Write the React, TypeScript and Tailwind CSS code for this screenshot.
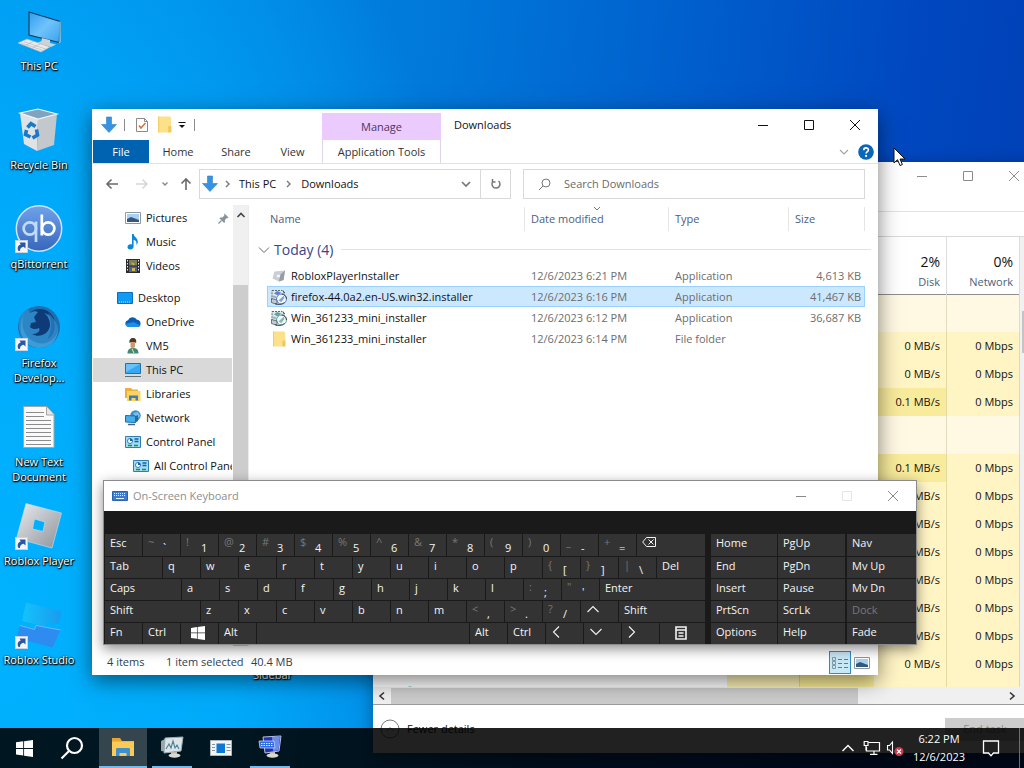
import type { ReactNode } from "react";

/* ---------- small shared drawing helpers ---------- */

type StrokeProps = { d: string; w?: number; h?: number; sw?: number; className?: string };

function Stroke({ d, w = 12, h = 12, sw = 1, className = "" }: StrokeProps) {
  return (
    <svg width={w} height={h} viewBox={`0 0 ${w} ${h}`} fill="none" stroke="currentColor" strokeWidth={sw} className={`shrink-0 ${className}`} aria-hidden="true">
      <path d={d} />
    </svg>
  );
}

const CHEVRON_DOWN = "M2 4l4 4 4-4";
const CHEVRON_RIGHT = "M4 3l3 3-3 3";
const MINIMIZE = "M1 6.5h10";
const MAXIMIZE = "M1.5 1.5h9v9h-9z";
const CLOSE = "M1 1l10 10M11 1L1 11";

function DownloadArrow({ size = 18 }: { size?: number }) {
  return (
    <svg width={size} height={size} viewBox="0 0 18 18" aria-hidden="true">
      <path d="M6.500 1h5v7.500H16.500L9 16.500 1.500 8.500h5z" fill="#3593e2" stroke="#2d7fcb" strokeWidth=".6" />
    </svg>
  );
}

function Folder({ size = 16 }: { size?: number }) {
  return (
    <svg width={size} height={size} viewBox="0 0 16 16" aria-hidden="true">
      <path d="M2 .5h11l1.200 1.200V14.500L13 15.500H2z" fill="#fce08a" />
      <path d="M2 .5h1v15H2z" fill="#f3cd62" />
      <path d="M11.500 9.500h3V15.500h-3z" fill="#f0c95c" />
    </svg>
  );
}

function ShortcutBadge({ y = 35 }: { y?: number }) {
  return (
    <g transform={`translate(0 ${y})`}>
      <rect x=".5" y=".5" width="12" height="12" fill="#f4f6fa" stroke="#c9d3e0" />
      <path d="M3.200 10.800c-1.200-3.600.2-5.800 2.600-6.300L4.500 2.500h6v6L8.600 6.800C6.500 7.200 4.800 8.500 5 11z" fill="#2a57a5" />
    </g>
  );
}

/* ---------- desktop ---------- */

const big = { width: 48, height: 48, viewBox: "0 0 48 48", "aria-hidden": true } as const;

const desktopItems: { label: string; icon: ReactNode }[] = [
  {
    label: "This PC",
    icon: (
      <svg {...big}>
        <defs>
          <linearGradient id="scr" x1="0" y1="0" x2="1" y2="1">
            <stop offset="0" stopColor="#2f9df0" />
            <stop offset=".5" stopColor="#6fc3fb" />
            <stop offset="1" stopColor="#3aa3ef" />
          </linearGradient>
        </defs>
        <path d="M14 5l31 9.500-.7 21L14 28z" fill="url(#scr)" stroke="#17415f" strokeWidth="1.200" />
        <path d="M45 14.500v20.500l-1 .7" stroke="#b9cbd6" strokeWidth="1.200" fill="none" />
        <path d="M27 31l8 2v3l6 1.500-5 2.500-14-4 4.500-2z" fill="#cbd3d9" />
        <path d="M3 36l9-4 23 8-9 5z" fill="#eceae8" stroke="#b5b7ba" strokeWidth=".6" />
        <path d="M6 36.200l22 7.200M9 34.800l22 7.300M11 38l8-3.800M18 40.400l8-3.800" stroke="#a9b4bf" strokeWidth=".6" />
      </svg>
    ),
  },
  {
    label: "Recycle Bin",
    icon: (
      <svg {...big}>
        <path d="M5 7l18 5-1 33-13-7z" fill="#dfe3e6" />
        <path d="M23 12l19-4-3 31-17 6z" fill="#c3c8cc" />
        <path d="M5 7l18-4 19 5-19 5z" fill="#7ea4bf" stroke="#eef4f8" strokeWidth="1.200" />
        <g fill="none" stroke="#1b78c8" strokeWidth="3.600">
          <path d="M12.500 21.500l3.500-4 4.500 3" />
          <path d="M11.500 24l-1 4.500 5 2.500" />
          <path d="M21.500 23.500l1 5.500-5 3" />
        </g>
      </svg>
    ),
  },
  {
    label: "qBittorrent",
    icon: (
      <svg {...big}>
        <defs>
          <linearGradient id="qb" x1="0" y1="0" x2="0" y2="1">
            <stop offset="0" stopColor="#70a2ea" />
            <stop offset="1" stopColor="#3766bb" />
          </linearGradient>
        </defs>
        <circle cx="24" cy="23.500" r="22.700" fill="url(#qb)" stroke="#cfe3fb" strokeWidth="1.500" />
        <g fill="none" strokeWidth="2.700">
          <circle cx="14.800" cy="23.500" r="6.200" stroke="#c3dbfa" />
          <path d="M21 16.500V37" stroke="#c3dbfa" />
          <circle cx="33.200" cy="23.500" r="6.200" stroke="#fff" />
          <path d="M26.800 9.500v21" stroke="#fff" />
        </g>
        <ShortcutBadge />
      </svg>
    ),
  },
  {
    label: "Firefox Develop...",
    icon: (
      <svg {...big}>
        <circle cx="24" cy="23" r="21" fill="#1f6fae" />
        <circle cx="25" cy="20" r="15" fill="#0e3b78" />
        <path d="M4 15c2-5 5-8 9-10l2 4c3-2 6-2 8-1l-4 5 2 5-5 1-1 4c3 3 7 2 9 1 2 4-3 6-7 6 7 4 16 1 18-8 0-6-2-10-6-13 7 2 14 9 14 17 0 10-9 18-19 18C12 44 2 34 4 15z" fill="#2c86c6" />
        <path d="M9 10c-4 12 0 25 14 29 9 2 17-3 20-12-2 12-10 17-19 17C10 43 0 28 9 10z" fill="#3c9bd8" />
        <path d="M33 9c6 4 8 11 6 18-1 4-4 7-7 8 5-7 6-17 1-26z" fill="#2470b5" />
        <ShortcutBadge y={34} />
      </svg>
    ),
  },
  {
    label: "New Text Document",
    icon: (
      <svg {...big}>
        <path d="M8.500 3.500h23l7.500 8v33H8.500z" fill="#fafafa" stroke="#a5a5a5" />
        <path d="M31.500 3.500V12H39" fill="#e6e6e6" stroke="#a5a5a5" />
        <path d="M11 9.500h18M11 13.500h18M11 17.500h25M11 21.500h25M11 25.500h25M11 29.500h25M11 33.500h25M11 37.500h25M11 41.500h25" stroke="#8c8c8c" />
      </svg>
    ),
  },
  {
    label: "Roblox Player",
    icon: (
      <svg {...big}>
        <defs>
          <linearGradient id="rb" x1="0" y1="0" x2="1" y2="1">
            <stop offset="0" stopColor="#e9ebee" />
            <stop offset="1" stopColor="#8e939a" />
          </linearGradient>
        </defs>
        <path fillRule="evenodd" d="M11 1.500L46.500 11 37 46 1.500 36.500zM19.500 17l-2 10 10.500 2.500 2-9.500z" fill="url(#rb)" stroke="#d5dde4" strokeWidth=".6" />
        <ShortcutBadge />
      </svg>
    ),
  },
  {
    label: "Roblox Studio",
    icon: (
      <svg {...big}>
        <defs>
          <linearGradient id="rs" x1="0" y1="0" x2="1" y2="0">
            <stop offset="0" stopColor="#12c4fb" />
            <stop offset="1" stopColor="#1b9aef" />
          </linearGradient>
        </defs>
        <path d="M11 1.500L46.500 10.500l-3 13-12-3-1.500 5-23-5.500z" fill="url(#rs)" />
        <path d="M5 24.500l14.500 4 1.500-4 24.500 4.500L37.500 46.500 1.500 37z" fill="#2e8bef" />
        <path d="M5 24.500l14.500 4 1.500-4 24.500 4.500" stroke="#63bbff" fill="none" />
        <ShortcutBadge />
      </svg>
    ),
  },
];

const labelShadow = "[text-shadow:1px_1px_1px_#000,0_1px_2px_#000,0_0_2px_#000]";

function DesktopIcons() {
  return (
    <div className="grid w-[78px] auto-rows-[99px]">
      {desktopItems.map((item) => (
        <a key={item.label} href="#" className="flex flex-col items-center gap-[3px] pt-[7px]">
          {item.icon}
          <span className={`w-full text-center text-[11px] leading-[15px] text-white ${labelShadow}`}>{item.label}</span>
        </a>
      ))}
    </div>
  );
}

/* ---------- window controls ---------- */

function WindowButtons({ tone, disabledMax = false }: { tone: string; disabledMax?: boolean }) {
  const cls = "flex w-[46px] items-center justify-center";
  return (
    <div className={`ml-auto flex self-stretch ${tone}`}>
      <button aria-label="Minimize" className={cls}><Stroke d={MINIMIZE} /></button>
      <button aria-label="Maximize" disabled={disabledMax} className={`${cls} disabled:opacity-20`}><Stroke d={MAXIMIZE} /></button>
      <button aria-label="Close" className={cls}><Stroke d={CLOSE} /></button>
    </div>
  );
}

/* ---------- task manager ---------- */

type Usage = { disk: string; net: string; hot?: boolean } | null;

const idle = { disk: "0 MB/s", net: "0 Mbps" };
const busy = { disk: "0.1 MB/s", net: "0 Mbps", hot: true };

const usageRows: Usage[] = [null, idle, idle, busy, null, busy, idle, idle, idle, idle, idle, idle, idle];

function TaskManager() {
  return (
    <section aria-label="Task Manager" className="absolute left-[373px] top-[162px] flex h-[591px] w-[664px] flex-col bg-white shadow-[0_4px_16px_rgba(0,0,0,0.35)]">
      <div className="flex h-[28px]">
        <WindowButtons tone="text-[#8d8d8d]" />
      </div>
      <div className="h-[22px] border-b border-[#e3e3e3]" />
      <div className="h-[25px] border-b border-[#d9d9d9]" />
      <div className="flex min-h-0 flex-1">
        <div className="min-w-0 flex-1 overflow-hidden">
          <table className="w-full table-fixed border-collapse text-right">
            <colgroup>
              <col />
              <col className="w-[73px]" />
              <col className="w-[74px]" />
              <col className="w-[73px]" />
              <col className="w-[73px]" />
            </colgroup>
            <thead>
              <tr className="h-[57px] border-b border-[#8e8e8e]">
                <td />
                <td />
                <td />
                <th className="border-r border-[#dcdcdc] pr-[6px] pt-[11px] font-normal">
                  <div className="text-[14px] leading-[22px] text-[#111]">2%</div>
                  <div className="text-[11px] leading-[18px] text-[#4c5f7a]">Disk</div>
                </th>
                <th className="border-r border-[#dcdcdc] pr-[6px] pt-[11px] font-normal">
                  <div className="text-[14px] leading-[22px] text-[#111]">0%</div>
                  <div className="text-[11px] leading-[18px] text-[#4c5f7a]">Network</div>
                </th>
              </tr>
            </thead>
            <tbody className="text-[11px] leading-[16px] text-[#111]">
              {usageRows.map((row, i) =>
                row === null ? (
                  <tr key={i} className="h-[38px]">
                    <td />
                    <td className="bg-[#fff8e3]" />
                    <td className="bg-[#fff8e3]" />
                    <td className="border-r border-[#e4dcc0] bg-[#fff8e3]" />
                    <td className="border-r border-[#e4dcc0] bg-[#fff8e3]" />
                  </tr>
                ) : (
                  <tr key={i} className="h-[28px]">
                    <td />
                    <td className="bg-[#fcf1b6]" />
                    <td className="border-l border-[#ddd394] bg-[#f9ec97]" />
                    <td className={`border-r border-[#e4d9a0] pr-[6px] ${row.hot ? "bg-[#f8eb9c]" : "bg-[#fff4c4]"}`}>{row.disk}</td>
                    <td className="border-r border-[#e4d9a0] bg-[#fff4c4] pr-[6px]">{row.net}</td>
                  </tr>
                ),
              )}
              <tr className="h-[28px]">
                <td className="pl-[29px] pt-[3px]">
                  <svg width="16" height="16" viewBox="0 0 16 16" aria-hidden="true">
                    <circle cx="8" cy="8" r="7.500" fill="#22a7b8" />
                  </svg>
                </td>
                <td className="bg-[#fcf1b6]" />
                <td className="border-l border-[#ddd394] bg-[#f9ec97]" />
                <td className="border-r border-[#e4d9a0] bg-[#fff4c4]" />
                <td className="border-r border-[#e4d9a0] bg-[#fff4c4]" />
              </tr>
            </tbody>
          </table>
        </div>
        <div className="w-[17px] bg-[#f1f1f1] pl-[2px] pt-[74px]">
          <div className="h-[42px] bg-[#c4c4c4]" />
        </div>
      </div>
      <div className="flex h-[18px] items-center border-b border-[#9b9b9b] bg-[#f0f0f0]">
        <button aria-label="Scroll left" className="flex w-[18px] justify-center text-[#333]"><Stroke d="M8 2.500L4 6l4 3.500" sw={1.6} /></button>
        <div className="h-[16px] w-[467px] bg-[#cbcbcb]" />
        <button aria-label="Scroll right" className="ml-auto mr-[16px] flex w-[18px] justify-center text-[#333]"><Stroke d="M4 2.500L8 6l-4 3.500" sw={1.6} /></button>
      </div>
      <div className="flex h-[48px] items-start">
        <button className="flex items-center gap-[7px] pl-[7px] pt-[14px] text-[11px] leading-[20px] text-[#111]">
          <svg width="20" height="20" viewBox="0 0 20 20" fill="none" stroke="#777" aria-hidden="true">
            <circle cx="10" cy="10" r="9" />
            <path d="M6.500 12L10 8.500l3.500 3.500" />
          </svg>
          Fewer details
        </button>
        <button disabled className="ml-auto mr-[12px] mt-[13px] h-[23px] w-[80px] bg-[#cccccc] text-[11px] text-[#8a8a8a]">End task</button>
      </div>
    </section>
  );
}

/* ---------- explorer ---------- */

const MonitorIcon = (
  <svg width="16" height="16" viewBox="0 0 16 16" aria-hidden="true">
    <path d="M.5 1.500h15v10H.5z" fill="#37a9f2" stroke="#2272a8" />
    <path d="M1 2h14L1 10z" fill="#67c4fb" />
    <path d="M0 14.500h16" stroke="#5c6e7a" />
  </svg>
);

const PanelIcon = (
  <svg width="16" height="16" viewBox="0 0 16 16" aria-hidden="true">
    <path d="M.5 2.500h15v11H.5z" fill="#9fdcf8" stroke="#2f7fae" />
    <circle cx="5" cy="7" r="2.500" fill="#fff" stroke="#2a7fc9" />
    <path d="M5 7V4.500A2.500 2.500 0 017.500 7z" fill="#1b5f9f" />
    <path d="M9.500 5h4M9.500 7.500h4" stroke="#175f9c" strokeWidth="1.500" />
    <path d="M3 11.500h4M9 11.500h4" stroke="#2a8a3c" strokeWidth="1.500" />
  </svg>
);

const PictureIcon = (
  <svg width="16" height="16" viewBox="0 0 16 16" aria-hidden="true">
    <path d="M.5 2.500h15v11H.5z" fill="#fff" stroke="#8b97a1" />
    <path d="M2 4h12v8H2z" fill="#a9d2f2" />
    <path d="M2 9l4-2 8 3v2H2z" fill="#33587c" />
  </svg>
);

type NavItem = { label: string; icon: ReactNode; pad: string; pinned?: boolean; current?: boolean; gap?: boolean };

const navItems: NavItem[] = [
  { label: "Pictures", pad: "pl-[32px]", pinned: true, icon: PictureIcon },
  {
    label: "Music",
    pad: "pl-[32px]",
    icon: (
      <svg width="16" height="16" viewBox="0 0 16 16" aria-hidden="true">
        <path d="M7 0h1.600c.4 3 4.400 4 4.200 8-.1 1.500-.8 2.400-1.500 3 .8-3-.8-4.600-2.700-5.200V12.500c0 1.900-1.500 3-3.300 3S2.500 14.500 2.500 13s1.400-2.700 3-2.700c.6 0 1.100.1 1.500.3z" fill="#0d87d8" />
      </svg>
    ),
  },
  {
    label: "Videos",
    pad: "pl-[32px]",
    icon: (
      <svg width="16" height="16" viewBox="0 0 16 16" aria-hidden="true">
        <path d="M1 1h14v14H1z" fill="#2b2b2b" />
        <path d="M4 2h8v5.500H4z" fill="#7d7f55" />
        <path d="M4 8.500h8V14H4z" fill="#46669b" />
        <path d="M6 4l4 2-2 1.500zM7 10h3v3H7z" fill="#d3b44a" />
        <path d="M2.500 2v12M13.500 2v12" stroke="#e8e8e8" strokeDasharray="1.500 1.500" />
      </svg>
    ),
  },
  {
    label: "Desktop",
    pad: "pl-[24px]",
    gap: true,
    icon: (
      <svg width="16" height="16" viewBox="0 0 16 16" aria-hidden="true">
        <path d="M.5 2.500h15v11H.5z" fill="#0f9bf5" stroke="#0b6fb8" />
        <path d="M2 12h12" stroke="#bfe5ff" strokeDasharray="1 1" />
      </svg>
    ),
  },
  {
    label: "OneDrive",
    pad: "pl-[32px]",
    icon: (
      <svg width="16" height="16" viewBox="0 0 16 16" aria-hidden="true">
        <path d="M3.500 13A3.400 3.400 0 013 6.300 5 5 0 0112 5.800a3.700 3.700 0 011 7.200z" fill="#0a5fb5" />
        <path d="M3.500 13a3.400 3.400 0 01-3-3l8-2 7 3.500a3 3 0 01-2.500 1.500z" fill="#1d8fe4" />
      </svg>
    ),
  },
  {
    label: "VM5",
    pad: "pl-[32px]",
    icon: (
      <svg width="16" height="16" viewBox="0 0 16 16" aria-hidden="true">
        <path d="M2.500 15.500c0-4 2-5.500 5.500-5.500s5.500 1.500 5.500 5.500z" fill="#3f8a6c" />
        <path d="M5.500 2.500h4.500v6l-2 2.500-2.500-2z" fill="#cf9a73" />
        <path d="M4.500 5c-.5-3 1-5 3.500-5s4 2 3 5.500L10 4H6z" fill="#4d3a2c" />
        <path d="M7 11l2 4" stroke="#d9efe5" />
      </svg>
    ),
  },
  { label: "This PC", pad: "pl-[32px]", current: true, icon: MonitorIcon },
  {
    label: "Libraries",
    pad: "pl-[32px]",
    icon: (
      <svg width="16" height="16" viewBox="0 0 16 16" aria-hidden="true">
        <path d="M0 2h6l1.500 1.500H13V12H0z" fill="#e9b13c" />
        <path d="M2 5h13.500v10H2z" fill="#fcd462" />
        <path d="M4 14.500V9.500h9v5h-2.500v-2.500h-4v2.500z" fill="#3c7fb8" />
      </svg>
    ),
  },
  {
    label: "Network",
    pad: "pl-[32px]",
    icon: (
      <svg width="16" height="16" viewBox="0 0 16 16" aria-hidden="true">
        <circle cx="10.500" cy="5.500" r="5.200" fill="#3a8ccb" />
        <path d="M8 3l5-1 2 4-3 3z" fill="#7cc0e8" />
        <path d="M.5 5.500l10 .5v6.500l-10-.5z" fill="#46b0ef" stroke="#1f6da6" />
        <path d="M10.500 6l2.500-1v6l-2.500 1.500z" fill="#1f6da6" />
        <path d="M3 14.500h7" stroke="#46647c" strokeWidth="1.500" />
      </svg>
    ),
  },
  { label: "Control Panel", pad: "pl-[32px]", icon: PanelIcon },
  { label: "All Control Panel Items", pad: "pl-[40px]", icon: PanelIcon },
];

function NavPane() {
  return (
    <div className="flex w-[157px] shrink-0 border-r border-[#ececec]">
      <nav className="ml-px w-[139px] overflow-hidden pt-px text-[11px] text-[#111]">
        {navItems.map((item) => (
          <a
            key={item.label}
            href="#"
            className={`flex h-[24px] items-center gap-[5px] whitespace-nowrap ${item.pad} ${item.gap ? "mt-[8px]" : ""} ${item.current ? "bg-[#d9d9d9]" : ""}`}
          >
            <span className="shrink-0">{item.icon}</span>
            {item.label}
            {item.pinned && (
              <svg width="11" height="11" viewBox="0 0 11 11" className="ml-auto mr-[3px] shrink-0" aria-hidden="true">
                <path d="M6.500.5l4 4-1 .8-.6-.2-2 2 .1 2-.9.900L1.400 5.300l.8-.9 2.200.1 2-2-.3-.8z" fill="#8a929b" />
                <path d="M3.500 7.500L.5 10.500" stroke="#8a929b" strokeWidth="1.200" />
              </svg>
            )}
          </a>
        ))}
      </nav>
      <div className="ml-px flex w-[15px] flex-col items-center bg-[#f0f0f0] text-[#444]">
        <button aria-label="Scroll up" className="h-[80px] pb-[60px]"><Stroke d="M2.500 8L6 4.500 9.500 8" sw={1.6} /></button>
        <div className="w-full flex-1 bg-[#cdcdcd]" />
      </div>
    </div>
  );
}

function InstallerIcon({ accent }: { accent: string }) {
  return (
    <svg width="16" height="16" viewBox="0 0 16 16" aria-hidden="true">
      <path d="M1 1.500h10l2 2v8H1z" fill="#dfe6ec" stroke="#5d6973" strokeDasharray="2 1" />
      <path d="M3 4.500l3-2.500 4 1.500-3 3z" fill={accent} />
      <path d="M2 6.500l3 .8v2l-3-.8z" fill={accent} opacity=".6" />
      <circle cx="10.500" cy="10" r="5" fill="#f2f6f8" stroke={accent} />
      <path d="M12 1.500l1.500 2.500M10.500 5c2.800 0 5 2.200 5 5" stroke="#3b4751" fill="none" />
      <path d="M7.500 11.500l5.500-5 .3 2.500-3 4z" fill={accent} opacity=".75" />
      <path d="M.5 9.500L6 11v4.500L.5 13.500z" fill="#c4ccd3" stroke="#3c4953" strokeWidth=".7" />
      <path d="M4 14.500c3 1.600 7 1.200 9.500-1" stroke="#3b4751" fill="none" />
    </svg>
  );
}

const files = [
  {
    name: "RobloxPlayerInstaller",
    date: "12/6/2023 6:21 PM",
    type: "Application",
    size: "4,613 KB",
    icon: (
      <svg width="16" height="16" viewBox="0 0 16 16" aria-hidden="true">
        <path d="M3.500 3.500L14 2.500 12.500 12 8 13.500 1.500 10.500z" fill="#c9ced3" />
        <path d="M14 2.500L12.500 12 8 13.500 9 7z" fill="#959ca3" />
        <path d="M6 6.500l3.500.5-.8 2.500-3-.5z" fill="#f2f4f6" />
      </svg>
    ),
  },
  { name: "firefox-44.0a2.en-US.win32.installer", date: "12/6/2023 6:16 PM", type: "Application", size: "41,467 KB", selected: true, icon: <InstallerIcon accent="#5c86c6" /> },
  { name: "Win_361233_mini_installer", date: "12/6/2023 6:12 PM", type: "Application", size: "36,687 KB", icon: <InstallerIcon accent="#5fa39b" /> },
  { name: "Win_361233_mini_installer", date: "12/6/2023 6:14 PM", type: "File folder", size: "", icon: <Folder /> },
];

function FileTable() {
  return (
    <div className="min-w-0 flex-1 pl-[18px] pr-[13px] pt-[2px]">
      <table className="w-full table-fixed border-separate border-spacing-0 text-left text-[11px] leading-[16px] text-[#6d6d6d]">
        <colgroup>
          <col />
          <col className="w-[144px]" />
          <col className="w-[120px]" />
          <col className="w-[77px]" />
        </colgroup>
        <thead className="text-[#4c607a]">
          <tr className="h-[24px]">
            <th className="pl-[3px] font-normal">Name</th>
            <th aria-sort="descending" className="relative border-l border-[#e5e5e5] pl-[6px] font-normal">
              Date modified
              <Stroke d="M3 4l3 3 3-3" className="absolute left-[66px] -top-[4px] text-[#777]" />
            </th>
            <th className="border-l border-[#e5e5e5] pl-[6px] font-normal">Type</th>
            <th className="border-x border-[#e5e5e5] pl-[6px] font-normal">Size</th>
          </tr>
        </thead>
        <tbody>
          <tr className="h-[34px]">
            <th colSpan={4} className="pt-[3px] font-normal">
              <button className="-ml-[9px] flex w-[calc(100%+15px)] items-center gap-[4px] text-[14px] leading-[20px] text-[#3a4488]">
                <Stroke d="M1 3.500l5 5 5-5" className="text-[#666]" />
                Today (4)
                <span className="ml-[4px] h-px flex-1 bg-[#e2e2e2]" />
              </button>
            </th>
          </tr>
          {files.map((f, i) => (
            <tr key={i} className={`h-[21px] ${f.selected ? "bg-[#cce8ff] outline-1 -outline-offset-1 outline-[#99d1ff]" : ""}`}>
              <td className="pl-[4px]">
                <span className="flex items-center gap-[4px] text-[#111]">
                  <span className="shrink-0">{f.icon}</span>
                  {f.name}
                </span>
              </td>
              <td className="pl-[7px]">{f.date}</td>
              <td className="pl-[7px]">{f.type}</td>
              <td className="pr-[4px] text-right">{f.size}</td>
            </tr>
          ))}
        </tbody>
      </table>
    </div>
  );
}

function Explorer() {
  const tab = "pt-px text-center text-[11px] text-[#333]";
  return (
    <section aria-label="Downloads" className="absolute left-[92px] top-[109px] flex h-[566px] w-[786px] flex-col bg-white shadow-[0_6px_20px_rgba(0,0,0,0.5)]">
      <header className="flex h-[31px]">
        <div className="flex w-[230px] items-center pl-[8px]">
          <DownloadArrow />
          <span className="ml-[6px] h-[12px] w-px bg-[#8b8b8b]" />
          <button aria-label="Properties" className="ml-[10px]">
            <svg width="14" height="16" viewBox="0 0 14 16" aria-hidden="true">
              <path d="M1.500 1.500h8l3 3v10h-11z" fill="#fff" stroke="#8a8a8a" />
              <path d="M9.500 1.500v3h3" fill="none" stroke="#8a8a8a" />
              <path d="M4 8.500L6 11l4.500-5" fill="none" stroke="#d9704c" strokeWidth="1.600" />
            </svg>
          </button>
          <button aria-label="New folder" className="ml-[7px]"><Folder size={17} /></button>
          <button aria-label="Customize toolbar" className="ml-[4px] text-[#111]">
            <svg width="10" height="10" viewBox="0 0 10 10" aria-hidden="true">
              <path d="M1.500 2.500h7" stroke="#111" />
              <path d="M2 5h6L5 8z" fill="#111" />
            </svg>
          </button>
          <span className="ml-[7px] h-[12px] w-px bg-[#8b8b8b]" />
        </div>
        <button className="mt-[4px] w-[119px] bg-[#ebcbfd] pt-px text-[11px] text-[#4f3560]">Manage</button>
        <h1 className="self-center pl-[13px] pt-px text-[11px] text-[#111]">Downloads</h1>
        <WindowButtons tone="text-[#111]" />
      </header>
      <div className="flex h-[24px] border-b border-[#e3e3e3]">
        <div className="flex w-[230px] pl-px">
          <button className="w-[56px] bg-[#0063b1] pt-px text-[11px] text-white">File</button>
          <button className={`w-[58px] ${tab}`}>Home</button>
          <button className={`w-[58px] ${tab}`}>Share</button>
          <button className={`w-[55px] ${tab}`}>View</button>
        </div>
        <button className={`w-[119px] border-x border-[#e2d5ea] ${tab}`}>Application Tools</button>
        <div className="ml-auto flex items-center gap-[8px] pr-[4px]">
          <button aria-label="Expand ribbon" className="text-[#a5a5a5]"><Stroke d={CHEVRON_DOWN} sw={1.2} /></button>
          <button aria-label="Help">
            <svg width="16" height="16" viewBox="0 0 16 16" aria-hidden="true">
              <circle cx="8" cy="8" r="7.800" fill="#0a66b8" />
              <path d="M5.700 6.200C5.700 3 10.500 3.200 10.400 6c0 1.700-2.300 1.800-2.300 3.600" fill="none" stroke="#fff" strokeWidth="1.600" />
              <circle cx="8.100" cy="11.900" r="1.100" fill="#fff" />
            </svg>
          </button>
        </div>
      </div>
      <div className="flex h-[41px] items-center pb-px text-[11px] text-[#111]">
        <div className="flex w-[107px] items-center pl-[13px] text-[#6a6a6a]">
          <button aria-label="Back"><Stroke w={14} h={14} sw={1.6} d="M13 7H2M6.500 2.500L2 7l4.500 4.500" /></button>
          <button aria-label="Forward" className="ml-[16px] text-[#d6d6d6]"><Stroke w={14} h={14} sw={1.5} d="M1 7h11M7.500 2.500L12 7l-4.500 4.500" /></button>
          <button aria-label="Recent locations" className="ml-[10px] text-[#888]"><Stroke d="M3.500 4.500L6 7l2.500-2.500" sw={1.4} /></button>
          <button aria-label="Up" className="ml-[8px]"><Stroke w={14} h={14} sw={1.6} d="M7 13V2M2.500 6.500L7 2l4.500 4.500" /></button>
        </div>
        <div className="flex h-[30px] w-[312px] items-center border border-[#d9d9d9]">
          <span className="ml-px"><DownloadArrow /></span>
          <Stroke d={CHEVRON_RIGHT} sw={1.4} className="ml-[3px] text-[#777]" />
          <button className="ml-[5px]">This PC</button>
          <Stroke d={CHEVRON_RIGHT} sw={1.4} className="ml-[7px] text-[#777]" />
          <button className="ml-[6px]">Downloads</button>
          <button aria-label="Previous locations" className="ml-auto mr-[8px] text-[#777]"><Stroke d={CHEVRON_DOWN} sw={1.7} /></button>
          <button aria-label="Refresh" className="flex h-full w-[30px] items-center justify-center border-l border-[#d9d9d9] text-[#777]">
            <Stroke d="M3.200 3.200a4 4 0 105.300-.2M2.500 1v3h3" sw={1.5} />
          </button>
        </div>
        <label className="ml-[12px] mr-[13px] flex h-[30px] flex-1 items-center gap-[13px] border border-[#d9d9d9] pl-[14px] text-[#777]">
          <svg width="13" height="13" viewBox="0 0 13 13" fill="none" stroke="currentColor" aria-hidden="true">
            <circle cx="8" cy="5" r="4" />
            <path d="M5 8L1 12" />
          </svg>
          <input aria-label="Search Downloads" placeholder="Search Downloads" className="min-w-0 flex-1 outline-none placeholder:text-[#6b6b6b]" />
        </label>
      </div>
      <div className="flex min-h-0 flex-1">
        <NavPane />
        <FileTable />
      </div>
      <footer className="flex h-[29px] items-center bg-white pl-[15px] pr-[8px] pt-[4px] text-[11px] text-[#2f3f55]">
        <span className="w-[59px]">4 items</span>
        <span className="w-[85px] whitespace-nowrap">1 item selected</span>
        <span>40.4 MB</span>
        <button aria-label="Details view" className="ml-auto flex h-[23px] w-[22px] items-center justify-center border border-[#2a8dc4] bg-[#c9e8f6]">
          <svg width="18" height="14" viewBox="0 0 18 14" fill="none" aria-hidden="true">
            <path d="M1.500 1.500h3v3h-3zM1.500 5.500h3v3h-3zM1.500 9.500h3v3h-3z" stroke="#7f98aa" />
            <path d="M7 3.500h4M13 3.500h4M7 7.500h4M13 7.500h4M7 11.500h4M13 11.500h4" stroke="#5d7c90" />
          </svg>
        </button>
        <button aria-label="Large icons view" className="ml-[3px]">{PictureIcon}</button>
      </footer>
    </section>
  );
}

/* ---------- on-screen keyboard ---------- */

type KeyDef = { k?: string; alt?: string; w: string; glyph?: ReactNode; name?: string; center?: boolean };

const N = "w-[37px]";
const k = (c: string): KeyDef => ({ k: c, w: N });
const s = (alt: string, c: string): KeyDef => ({ k: c, alt, w: N });

const WinLogo = ({ size = 14 }: { size?: number }) => (
  <svg width={size} height={size} viewBox="0 0 16 16" fill="#fff" aria-hidden="true">
    <path d="M0 2.200l6.800-1v6.300H0zM7.600 1.100L16 0v7.500H7.600zM0 8.400h6.800v6.300l-6.800-1zM7.600 8.400H16V16l-8.400-1.200z" />
  </svg>
);

const keyRows: KeyDef[][] = [
  [
    { k: "Esc", w: N }, s("~", "`"), s("!", "1"), s("@", "2"), s("#", "3"), s("$", "4"), s("%", "5"), s("^", "6"), s("&", "7"), s("*", "8"), s("(", "9"), s(")", "0"), s("_", "-"), s("+", "="),
    { w: "flex-1", name: "Backspace", glyph: <Stroke w={14} h={12} d="M4.500 1.500h9v9h-9L.700 6zM6.500 3.500l5 5M11.500 3.500l-5 5" sw={1} /> },
  ],
  [{ k: "Tab", w: "w-[57px]" }, ..."qwertyuiop".split("").map(k), s("{", "["), s("}", "]"), s("|", "\\"), { k: "Del", w: "flex-1" }],
  [{ k: "Caps", w: "w-[76px]" }, ..."asdfghjkl".split("").map(k), s(":", ";"), s('"', "'"), { k: "Enter", w: "flex-1" }],
  [
    { k: "Shift", w: "w-[95px]" }, ..."zxcvbnm".split("").map(k), s("<", ","), s(">", "."), s("?", "/"),
    { w: N, name: "Up", glyph: <Stroke w={14} h={12} d="M1.500 9L7 3.500 12.500 9" sw={1.1} /> },
    { k: "Shift", w: "flex-1" },
  ],
  [
    { k: "Fn", w: N }, { k: "Ctrl", w: N }, { w: N, name: "Windows", center: true, glyph: <WinLogo /> }, { k: "Alt", w: N }, { w: "flex-1", name: "Space" }, { k: "Alt", w: N }, { k: "Ctrl", w: N },
    { w: N, name: "Left", glyph: <Stroke w={10} h={14} d="M8 1.500L2.500 7 8 12.500" sw={1.1} /> },
    { w: N, name: "Down", glyph: <Stroke w={14} h={14} d="M1.500 4L7 9.500 12.500 4" sw={1.1} /> },
    { w: N, name: "Right", glyph: <Stroke w={10} h={14} d="M2 1.500L7.500 7 2 12.500" sw={1.1} /> },
    { w: "w-[45px]", name: "Menu", center: true, glyph: <Stroke w={12} h={14} d="M1 1h10v12H1zM1 4h10M3.500 7h5M3.500 10h5" sw={1.6} /> },
  ],
];

const sideKeys: string[][] = [
  ["Home", "PgUp", "Nav"],
  ["End", "PgDn", "Mv Up"],
  ["Insert", "Pause", "Mv Dn"],
  ["PrtScn", "ScrLk", "Dock"],
  ["Options", "Help", "Fade"],
];

const keyBase = "flex items-start bg-[#333333] text-[11px] leading-[18px]";
const rowBase = "flex h-[21px] gap-px first:h-[22px]";

function Key({ def }: { def: KeyDef }) {
  const align = def.center ? "justify-center pr-[3px] pt-[3px]" : "pl-[5px]";
  return (
    <button aria-label={def.name} className={`${keyBase} ${align} ${def.w}`}>
      {def.alt ? (
        <>
          <span className="w-[15px] text-left leading-[15px] text-[#777]">{def.alt}</span>
          <span className="self-end leading-[17px]">{def.k}</span>
        </>
      ) : def.glyph ? (
        <span className={def.center ? "" : "pt-[2px]"}>{def.glyph}</span>
      ) : (
        def.k
      )}
    </button>
  );
}

function Keyboard() {
  return (
    <section aria-label="On-Screen Keyboard" className="absolute left-[103px] top-[480px] w-[814px] border border-[#8b8b8b] bg-white shadow-[0_4px_12px_rgba(0,0,0,0.45)]">
      <header className="flex h-[30px] items-center pl-[8px]">
        <svg width="16" height="10" viewBox="0 0 16 10" aria-hidden="true">
          <path d="M.5.5h15v9H.5z" fill="#3f7ccb" stroke="#2a62ab" />
          <path d="M2 2.500h12M2 4.500h12" stroke="#e6f0fb" strokeDasharray="1 1" />
          <path d="M4 7.500h8" stroke="#e6f0fb" />
        </svg>
        <h2 className="pl-[5px] text-[11px] text-[#8e8e8e]">On-Screen Keyboard</h2>
        <WindowButtons tone="text-[#888]" disabledMax />
      </header>
      <div className="flex bg-[#1a1a1a] pt-[23px] text-[#f3f3f3]">
        <div className="flex w-[601px] flex-col gap-px pl-px">
          {keyRows.map((row, i) => (
            <div key={i} className={rowBase}>
              {row.map((def, j) => <Key key={j} def={def} />)}
            </div>
          ))}
        </div>
        <div className="ml-[6px] flex flex-1 flex-col gap-px">
          {sideKeys.map((row) => (
            <div key={row[0]} className={rowBase}>
              <button className={`${keyBase} w-[66px] pl-[5px]`}>{row[0]}</button>
              <button className={`${keyBase} w-[67px] pl-[5px]`}>{row[1]}</button>
              <button disabled={row[2] === "Dock"} className={`${keyBase} ml-px flex-1 pl-[5px] disabled:text-[#777]`}>{row[2]}</button>
            </div>
          ))}
        </div>
      </div>
    </section>
  );
}

/* ---------- taskbar ---------- */

function MonitorApp({ kind }: { kind: "perf" | "keys" }) {
  return kind === "perf" ? (
    <svg width="24" height="24" viewBox="0 0 24 24" aria-hidden="true">
      <path d="M1 6l6-3v14l-6-1z" fill="#9aa6aa" />
      <path d="M5 3l18-1-2 14-17 2z" fill="#dbe4e6" stroke="#9dacb1" />
      <path d="M6 14l3-5 2 4 2-7 2 7 2-3 2 4" fill="none" stroke="#4c8299" strokeWidth="1.100" />
      <path d="M11 17h6v3h-6z" fill="#b9b9b0" />
      <ellipse cx="14.500" cy="20.500" rx="6" ry="2.200" fill="#dcd9ce" />
    </svg>
  ) : (
    <svg width="24" height="24" viewBox="0 0 24 24" aria-hidden="true">
      <path d="M5 2l18-1-2 15-14 2z" fill="#1f33b8" stroke="#b7c0dd" />
      <path d="M14 2l8-.5-1.500 14-5.500.5z" fill="#6d8aed" />
      <path d="M1 6h15l1 7H2z" fill="#2d6fe0" stroke="#c9d6f5" strokeWidth=".8" />
      <path d="M3 8.500h12M3 10.500h12" stroke="#dfe9ff" strokeDasharray="1.500 1" />
      <path d="M12 17h5v3h-5z" fill="#b9b9b0" />
      <ellipse cx="14.500" cy="20.500" rx="6" ry="2.200" fill="#dcd9ce" />
    </svg>
  );
}

function Taskbar() {
  const cell = "flex w-[48px] items-center justify-center self-stretch";
  return (
    <footer className="absolute inset-x-0 bottom-0 flex h-[40px] items-center bg-black/87 text-white">
      <button aria-label="Start" className={cell}><WinLogo size={17} /></button>
      <button aria-label="Search" className={cell}>
        <svg width="24" height="24" viewBox="0 0 24 24" fill="none" stroke="#fff" strokeWidth="2.200" aria-hidden="true">
          <circle cx="14.500" cy="9.500" r="7.500" />
          <path d="M9 15l-7.500 7.500" />
        </svg>
      </button>
      <div className="ml-[3px] flex gap-px self-stretch">
        <button aria-label="File Explorer" className={`${cell} border-b-2 border-[#76b9ed] bg-[#34454d]`}>
          <svg width="24" height="22" viewBox="0 0 24 22" aria-hidden="true">
            <path d="M1 2h8l2 3h12v6H1z" fill="#e5a530" />
            <path d="M1 5.500h22V20H1z" fill="#fbcb55" />
            <path d="M5 20v-6.500c0-1 .5-1.500 1.500-1.500h11c1 0 1.500.5 1.500 1.500V20h-3.500v-3h-7v3z" fill="#3f8fcc" />
          </svg>
        </button>
        <button aria-label="Task Manager" className="flex w-[48px] justify-center px-[4px]">
          <span className="flex flex-1 items-center justify-center self-stretch border-b-2 border-[#76b9ed]"><MonitorApp kind="perf" /></span>
        </button>
        <button aria-label="Run" className={cell}>
          <svg width="22" height="18" viewBox="0 0 22 18" aria-hidden="true">
            <path d="M.5 1.500h21v15H.5z" fill="#f2f4f6" stroke="#aeb6bd" />
            <path d="M6.500 4.500h8.500v9.500H6.500z" fill="#0f78d4" />
            <path d="M2 5.500h3M2 8.500h3M2 11.500h3M16.500 5.500h4M16.500 8.500h4M16.500 11.500h4" stroke="#8a949c" />
          </svg>
        </button>
        <button aria-label="On-Screen Keyboard" className="flex w-[48px] justify-center px-[4px]">
          <span className="flex flex-1 items-center justify-center self-stretch border-b-2 border-[#76b9ed]"><MonitorApp kind="keys" /></span>
        </button>
      </div>
      <div className="ml-auto flex items-center self-stretch">
        <button aria-label="Show hidden icons"><Stroke w={14} h={14} d="M1.500 10L7 4.500 12.500 10" sw={1.4} /></button>
        <button aria-label="Network" className="ml-[8px]">
          <svg width="18" height="16" viewBox="0 0 18 16" fill="none" stroke="#fff" strokeWidth="1.200" aria-hidden="true">
            <path d="M5.500 2.500h11v8.500H3.500V7M11 11v3M7 14.400h7.500" />
            <path d="M1.200 1.500h3.800v4H1.200zM3 5.500v5" />
          </svg>
        </button>
        <button aria-label="Volume muted" className="ml-[5px]">
          <svg width="18" height="18" viewBox="0 0 18 18" aria-hidden="true">
            <path d="M1.500 6.500h2L6.500 3v11.500L3.500 11h-2z" fill="none" stroke="#fff" strokeWidth="1.100" />
            <circle cx="13" cy="12.500" r="4.500" fill="#c93a4b" />
            <path d="M11 10.500l4 4M15 10.500l-4 4" stroke="#fff" strokeWidth="1.200" />
          </svg>
        </button>
        <time className="ml-[7px] w-[56px] whitespace-nowrap text-center text-[11px] leading-[18px]">
          6:22 PM
          <br />
          12/6/2023
        </time>
        <button aria-label="Notifications" className="ml-[15px]">
          <svg width="18" height="18" viewBox="0 0 18 18" fill="none" stroke="#fff" strokeWidth="1.300" aria-hidden="true">
            <path d="M1.500 2h15v12h-5l-2.500 2.700L6.500 14h-5z" />
          </svg>
        </button>
        <button aria-label="Show desktop" className="ml-[19px] w-[5px] self-stretch border-l border-[#6a6f73]" />
      </div>
    </footer>
  );
}

export default function App() {
  return (
    <main
      className="relative min-h-screen overflow-hidden bg-[radial-gradient(ellipse_520px_900px_at_0%_80%,#00b2ff_0%,#00aafa_45%,transparent_100%),linear-gradient(97deg,#0094ec_0%,#0078da_40%,#0048c0_82%,#003db2_100%)] text-[11px]"
      style={{ fontFamily: '"Open Sans", "Noto Sans", sans-serif' }}
    >
      <DesktopIcons />
      <span className={`absolute left-[253px] top-[667px] text-[11px] leading-[15px] text-white ${labelShadow}`}>Sidebar</span>
      <TaskManager />
      <Explorer />
      <Keyboard />
      <Taskbar />
      <svg width="13" height="20" viewBox="0 0 13 20" className="absolute left-[893px] top-[147px]" aria-hidden="true">
        <path d="M1 1v15l3.500-3.300L7 18.500l2.400-1L7 12h5z" fill="#fff" stroke="#111" />
      </svg>
    </main>
  );
}
